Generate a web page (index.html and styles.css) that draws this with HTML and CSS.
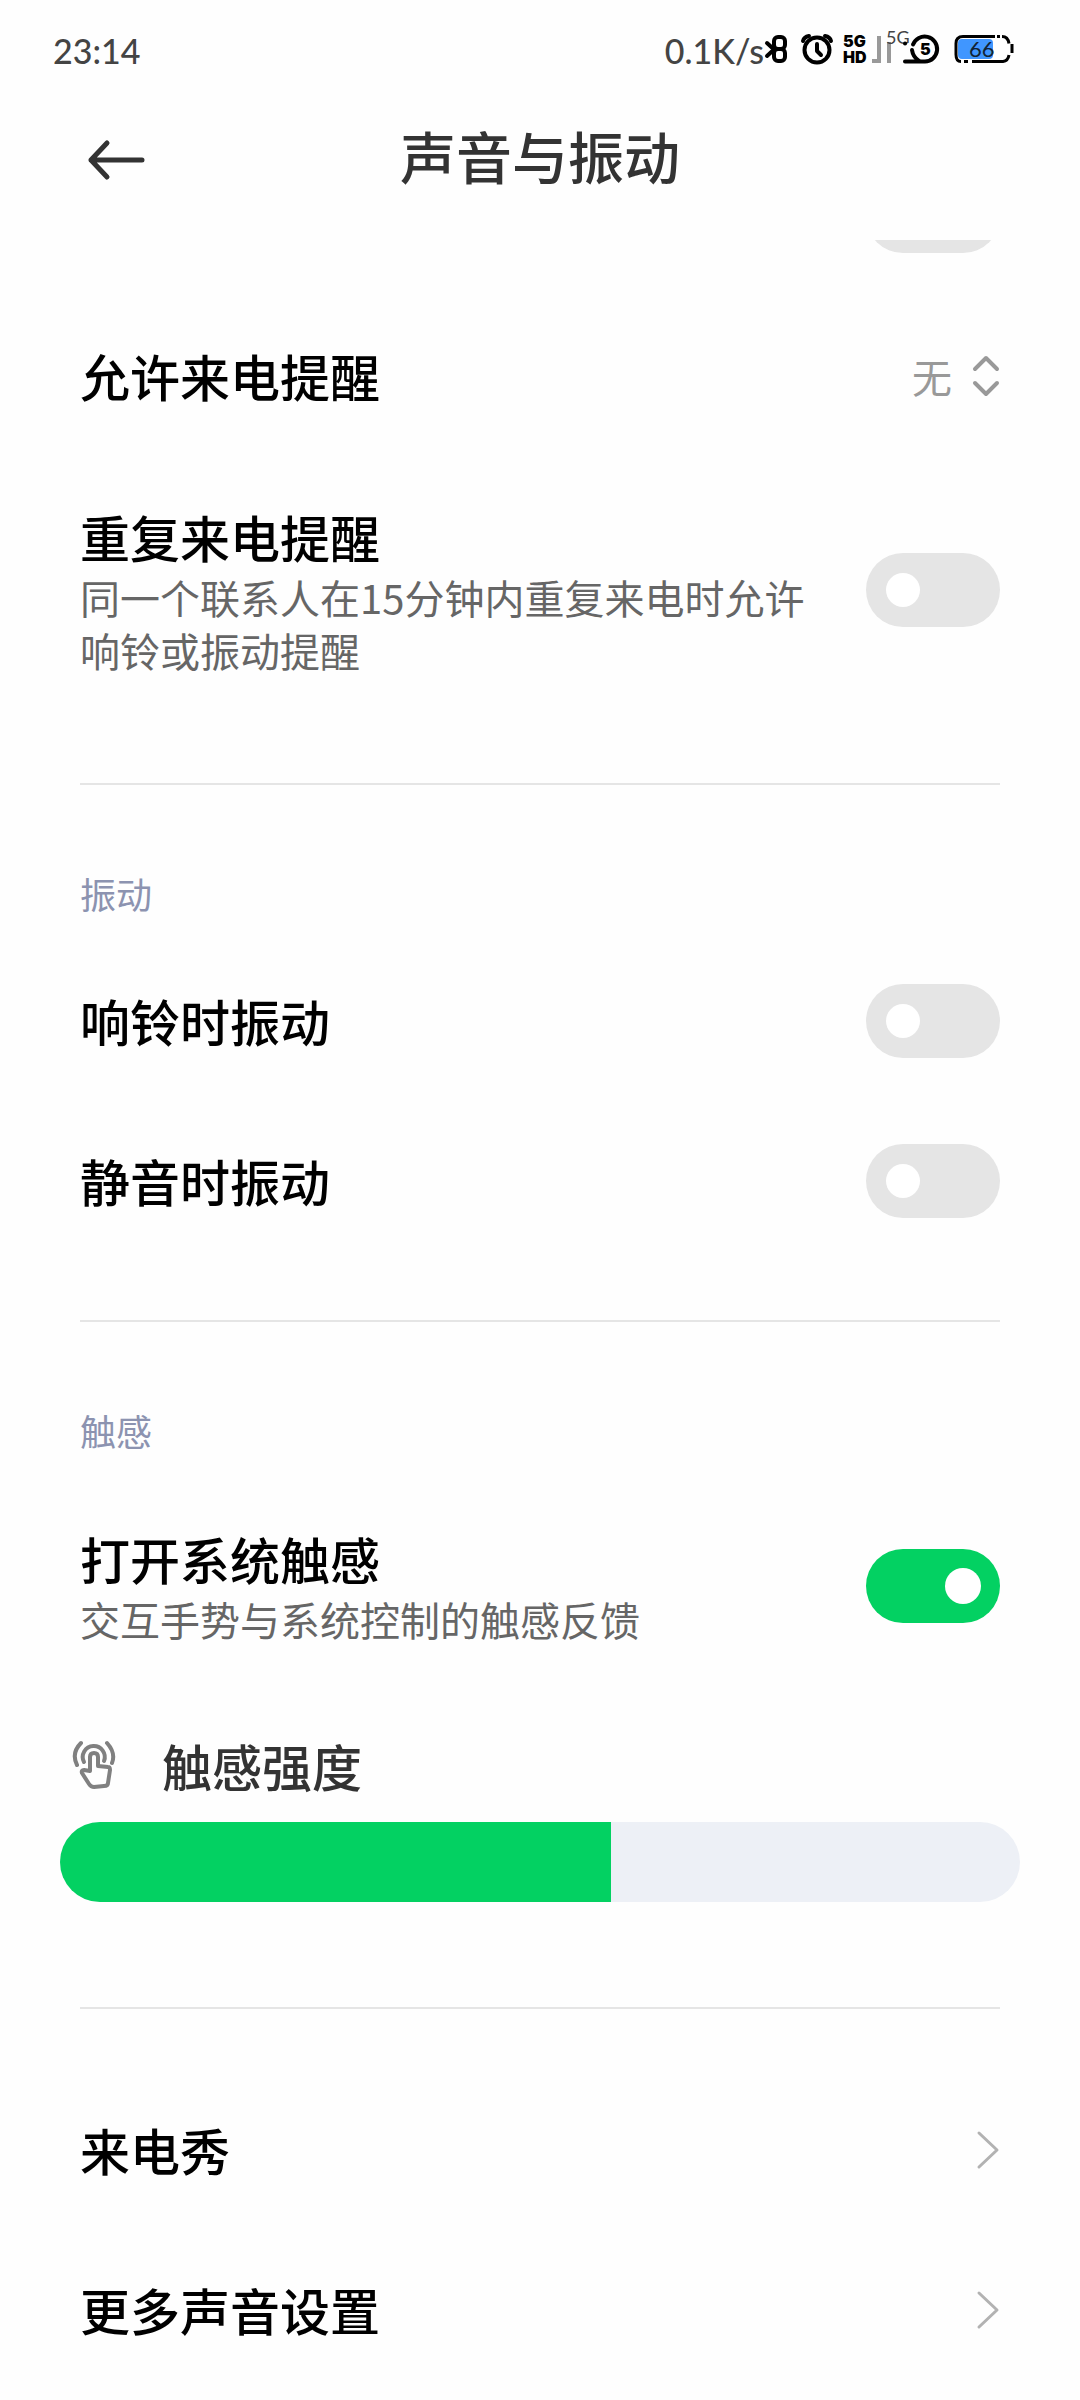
FILE: index.html
```html
<!DOCTYPE html>
<html lang="zh-CN">
<head>
  <meta charset="UTF-8" />
  <meta name="viewport" content="width=device-width, initial-scale=1.0"/>
  <title>声音与振动</title>
  <link rel="stylesheet" href="styles.css">
</head>
<body>

  <div class="status-bar">
    <span class="time">23:14</span>
    <div class="status-icons">
      <span class="speed">0.1K/s</span>
      <svg width="250" height="60" viewBox="0 -10 250 60" aria-hidden="true">
        <!-- bluetooth -->
        <g fill="none" stroke="#000" stroke-width="4" stroke-linecap="round" stroke-linejoin="round">
          <path d="M3 13l7 6.500-7 6.500"/>
          <rect x="10" y="7" width="11" height="12" rx="4"/>
          <rect x="10" y="19" width="11" height="12" rx="4"/>
        </g>
        <!-- alarm -->
        <g fill="none" stroke="#000" stroke-width="4" stroke-linecap="round" stroke-linejoin="round">
          <circle cx="53" cy="20" r="12.500"/>
          <path d="M53 14v7l4 4"/>
          <path d="M39 11q1-4 6-5M67 11q-1-4-6-5"/>
        </g>
        <text class="tag" x="79" y="17">5G</text>
        <text class="tag" x="79" y="33">HD</text>
        <!-- signal -->
        <path d="M108 31h7V6M125 33V12" fill="none" stroke="#999" stroke-width="4"/>
        <text class="net" x="122" y="14">5G</text>
        <!-- data saver -->
        <g fill="none" stroke="#000" stroke-width="4" stroke-linecap="round">
          <path d="M141 31.500h20a12.500 12.500 0 1 0-12-17"/>
          <path d="M148 20q1 7 7 11M141 13.500h.1"/>
        </g>
        <text class="tag" x="156" y="25">5</text>
        <!-- battery -->
        <rect x="194" y="9" width="35" height="20" rx="4" fill="#4096ff"/>
        <g fill="none" stroke="#000" stroke-width="3">
          <path d="M231 6.500h-32q-7 0-7 7v11q0 7 5 7M233 6.500h3M238 6.500q6 0 7 7M248 14v9M245 25q-1 6-6 6.500h-31M200 31.500h4"/>
        </g>
        <text class="level" x="205" y="27">66</text>
      </svg>
    </div>
  </div>

  <header class="title-bar">
    <button class="back" aria-label="返回">
      <svg width="60" height="44" viewBox="0 0 60 44" fill="none" stroke="#333" stroke-width="5" stroke-linecap="round" stroke-linejoin="round">
        <path d="M56 22H5M21 5L5 22l16 17"/>
      </svg>
    </button>
    <h1>声音与振动</h1>
  </header>

  <main class="settings">
    <div class="row clipped">
      <input type="checkbox" class="toggle" aria-label="开关">
    </div>

    <button class="row">
      <span class="label">允许来电提醒</span>
      <span class="value">无
        <svg width="28" height="42" viewBox="0 0 28 42" fill="none" stroke="#999" stroke-width="4" stroke-linecap="round" stroke-linejoin="round">
          <path d="M3 14L14 3l11 11M3 28l11 11 11-11"/>
        </svg>
      </span>
    </button>

    <label class="row tall">
      <span class="text">
        <span class="label">重复来电提醒</span>
        <span class="desc">同一个联系人在15分钟内重复来电时允许响铃或振动提醒</span>
      </span>
      <input type="checkbox" class="toggle">
    </label>

    <hr>
    <h2>振动</h2>

    <label class="row">
      <span class="label">响铃时振动</span>
      <input type="checkbox" class="toggle">
    </label>
    <label class="row">
      <span class="label">静音时振动</span>
      <input type="checkbox" class="toggle">
    </label>

    <hr>
    <h2>触感</h2>

    <label class="row tall">
      <span class="text">
        <span class="label">打开系统触感</span>
        <span class="desc">交互手势与系统控制的触感反馈</span>
      </span>
      <input type="checkbox" class="toggle" checked>
    </label>

    <div class="strength">
      <label class="strength-label" for="strength">
        <svg width="44" height="50" viewBox="0 0 44 50" fill="none" stroke="#808080" stroke-width="4" stroke-linecap="round" stroke-linejoin="round">
          <path d="M9 3Q-1 13 5 25M35 3q9 10 5 20"/>
          <path d="M12 22a11 11 0 1 1 20-1"/>
          <path d="M18 31V17q0-4 4-4t4 4v9l10 1q2 0 2 3l-2 13q0 3-4 3l-10 1q-3 0-5-3l-7-11q-1-3 2-3z"/>
        </svg>
        触感强度
      </label>
      <input type="range" class="slider" id="strength" min="0" max="1000" value="574">
    </div>

    <hr>

    <nav class="links">
      <a class="row" href="#">
        <span class="label">来电秀</span>
        <svg width="24" height="40" viewBox="0 0 24 40" fill="none" stroke="#b2b2b2" stroke-width="3" stroke-linecap="round" stroke-linejoin="round">
          <path d="M3 3l18 17L3 37"/>
        </svg>
      </a>
      <a class="row" href="#">
        <span class="label">更多声音设置</span>
        <svg width="24" height="40" viewBox="0 0 24 40" fill="none" stroke="#b2b2b2" stroke-width="3" stroke-linecap="round" stroke-linejoin="round">
          <path d="M3 3l18 17L3 37"/>
        </svg>
      </a>
    </nav>
  </main>

</body>
</html>
```
FILE: styles.css
```css
:root {
  --bg: #fefefe;
  --text: #000;
  --title: #333;
  --muted: #666;
  --section: #8c93b0;
  --track: #e5e5e5;
  --slider: #edf0f6;
  --green: #03d162;
}

* {
  box-sizing: border-box;
  font-family: 'Noto Sans CJK SC', sans-serif;
}

body {
  margin: 0;
  background: var(--bg);
  color: var(--text);
}

.status-bar {
  display: flex;
  justify-content: space-between;
  align-items: center;
  height: 100px;
  padding: 0 66px 0 53px;
  color: #444;
}

.time,
.speed {
  font-family: Lato, sans-serif;
  font-size: 34px;
  font-weight: 500;
}

.status-icons {
  display: flex;
  align-items: center;
}

.tag {
  font: 900 16px Inter, sans-serif;
}

.net {
  font: 18px Lato, sans-serif;
  fill: #444;
}

.level {
  font: 22px Lato, sans-serif;
  fill: #123;
}

.title-bar {
  display: grid;
  grid-template-columns: 60px 1fr 60px;
  align-items: center;
  height: 140px;
  padding: 0 86px 20px;
}

.back {
  display: flex;
  padding: 0;
  border: none;
  background: none;
  cursor: pointer;
}

h1 {
  margin: 0;
  padding-bottom: 10px;
  color: var(--title);
  font-size: 56px;
  font-weight: 500;
  line-height: 72px;
  text-align: center;
}

.row {
  display: flex;
  justify-content: space-between;
  align-items: center;
  width: 100%;
  min-height: 160px;
  padding: 0 80px;
  border: none;
  background: none;
  color: inherit;
  text-decoration: none;
  cursor: pointer;
}

.row.tall {
  padding: 47px 80px;
}

/* scrolled under the title bar, only the lower part is visible */
.row.clipped {
  align-items: flex-end;
  justify-content: flex-end;
  min-height: 0;
  height: 56px;
  padding-bottom: 43px;
  overflow: hidden;
}

.text {
  flex: 1;
  max-width: 740px;
}

.label {
  display: block;
  padding-bottom: 2px;
  font-size: 50px;
  font-weight: 500;
  line-height: 66px;
}

.desc {
  display: block;
  color: var(--muted);
  font-size: 40px;
  line-height: 53px;
}

.value {
  display: flex;
  align-items: center;
  gap: 20px;
  color: #999;
  font-size: 40px;
}

.toggle {
  appearance: none;
  flex: none;
  display: flex;
  align-items: center;
  width: 134px;
  height: 74px;
  margin: 0;
  padding: 0 20px;
  border-radius: 37px;
  background: var(--track);
  cursor: pointer;
}

.toggle::before {
  content: '';
  width: 34px;
  height: 34px;
  border-radius: 50%;
  background: #fff;
}

.toggle:checked {
  justify-content: flex-end;
  padding-right: 19px;
  background: var(--green);
}

.toggle:checked::before {
  width: 36px;
  height: 36px;
}

hr {
  height: 2px;
  margin: 59px 80px 0;
  border: none;
  background: var(--track);
}

h2 {
  margin: 0;
  padding: 84px 80px 24px;
  color: var(--section);
  font-size: 36px;
  font-weight: 400;
  line-height: 48px;
}

.strength {
  padding: 36px 60px 46px;
}

.strength-label {
  display: flex;
  align-items: center;
  gap: 46px;
  padding: 0 12px;
  color: var(--title);
  font-size: 50px;
  font-weight: 500;
  line-height: 72px;
}

.slider {
  appearance: none;
  display: block;
  width: 100%;
  height: 80px;
  margin: 21px 0 0;
  border-radius: 40px;
  background: var(--slider);
  overflow: hidden;
  cursor: pointer;
}

/* the thumb is invisible, its shadow paints the filled part */
.slider::-webkit-slider-thumb {
  appearance: none;
  width: 1px;
  height: 80px;
  background: var(--green);
  box-shadow: -1000px 0 0 1000px var(--green);
  clip-path: inset(0 0 0 -2000px);
}

.links {
  padding-top: 61px;
}
```
